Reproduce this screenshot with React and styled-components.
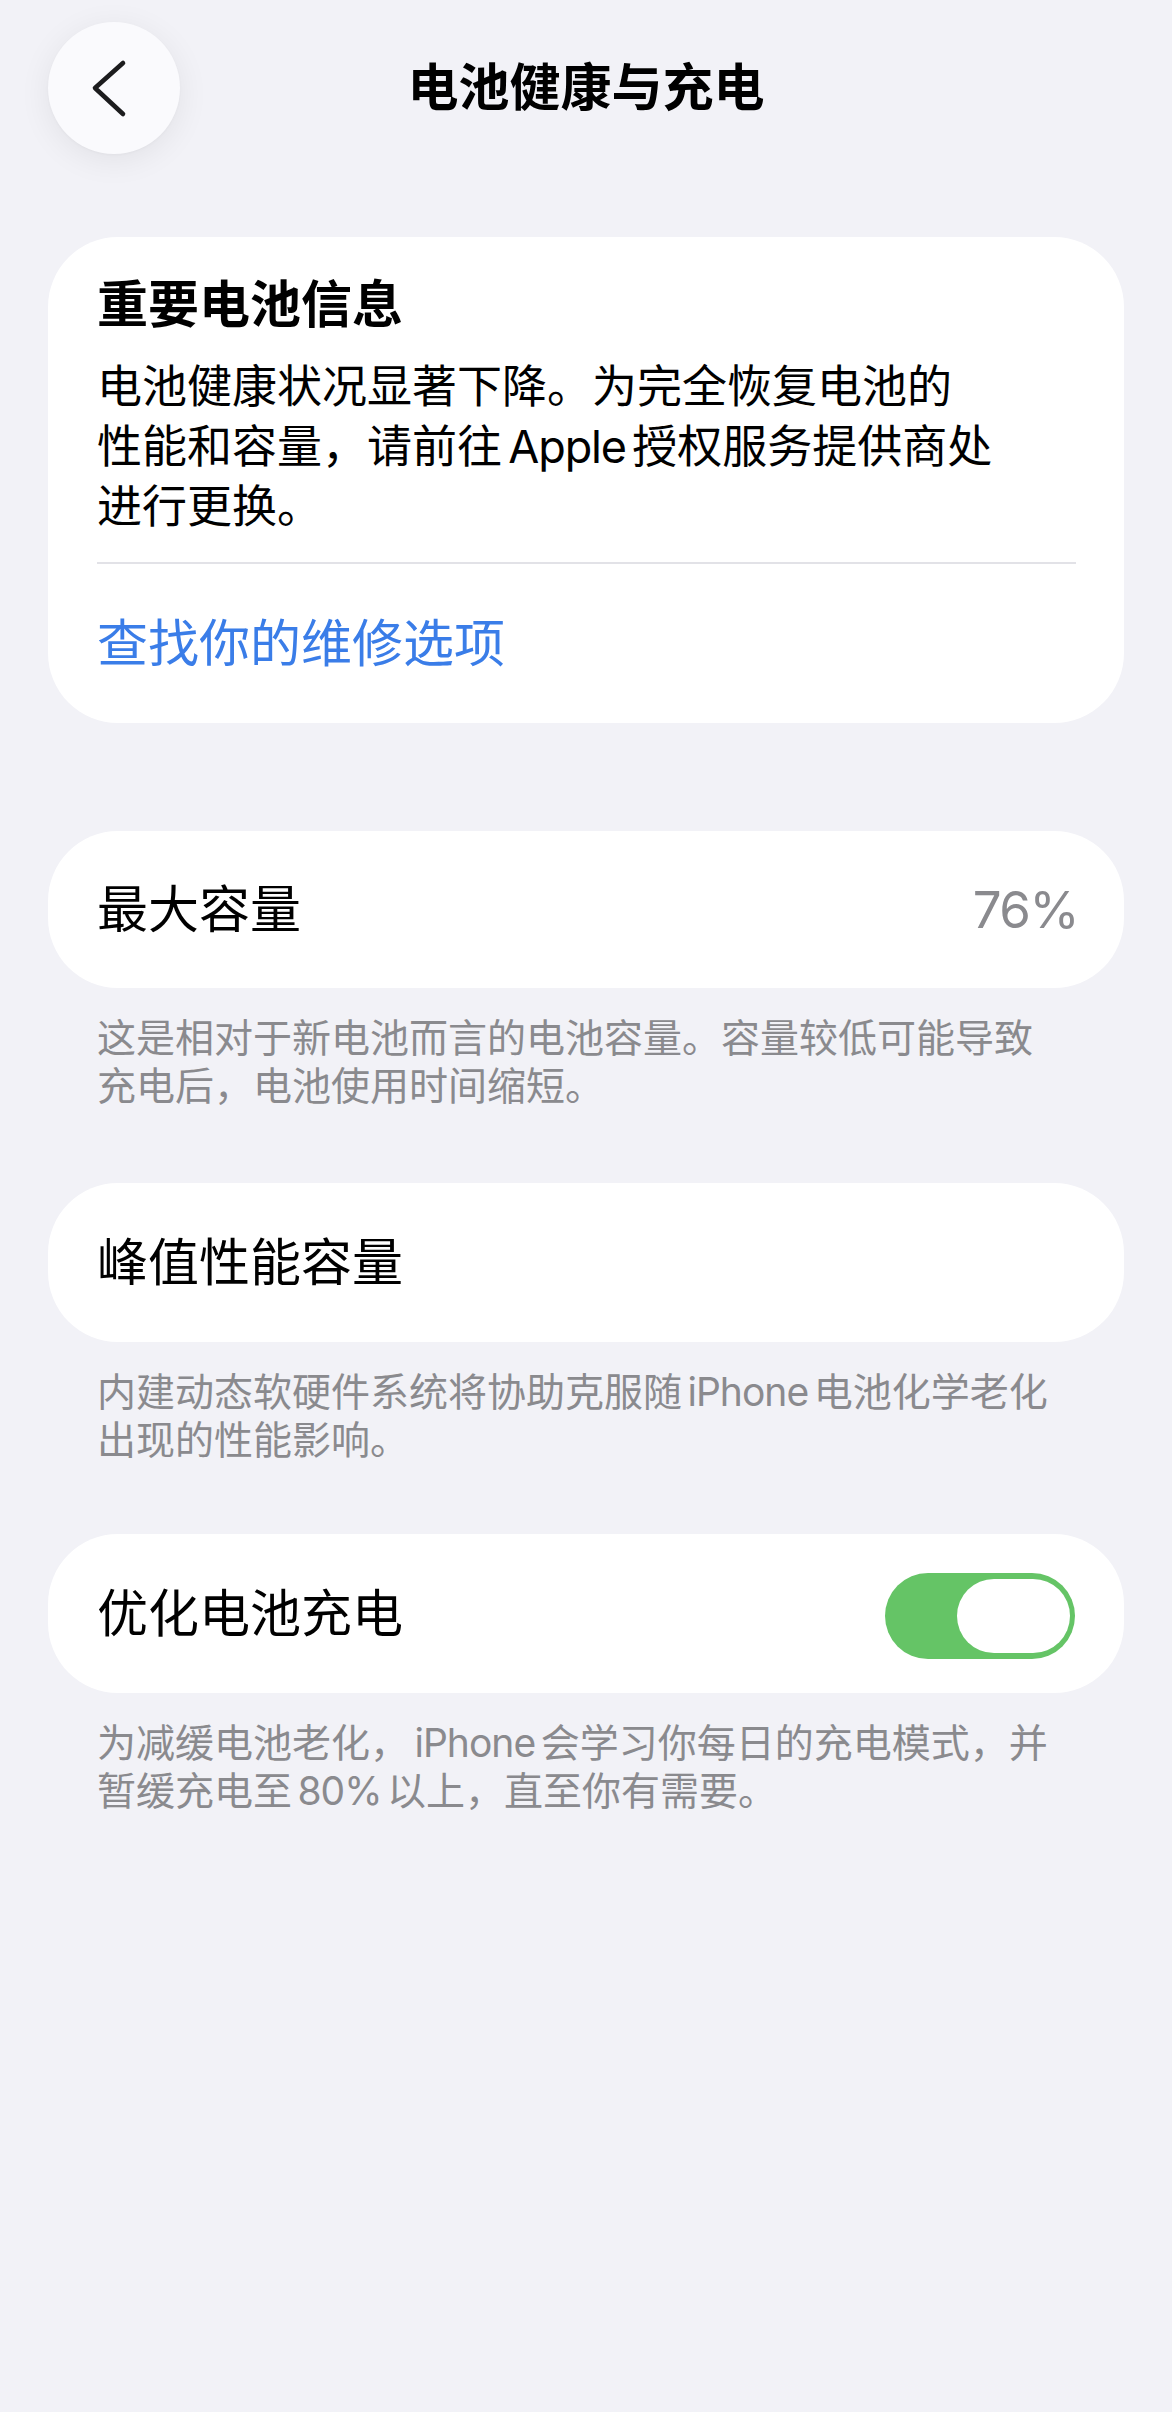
import React from "react";
import styled, { createGlobalStyle } from "styled-components";

const GlobalStyle = createGlobalStyle`
  html, body {
    margin: 0;
    padding: 0;
    background: #f2f2f7;
  }
  body {
    min-height: 2412px;
    font-family: "Inter", "Noto Sans CJK SC", "Noto Sans", sans-serif;
    -webkit-font-smoothing: antialiased;
  }
  * { box-sizing: border-box; }
`;

const Page = styled.div`
  width: 1172px;
  min-height: 2412px;
  background: #f2f2f7;
  color: #000;
`;

const Header = styled.header`
  position: relative;
  height: 176px;
  display: flex;
  align-items: center;
  justify-content: center;
`;

const BackButton = styled.button`
  position: absolute;
  left: 48px;
  top: 22px;
  width: 132px;
  height: 132px;
  border: none;
  border-radius: 50%;
  background: #fafafd;
  box-shadow: 0 6px 32px rgba(0, 0, 0, 0.07), 0 1px 3px rgba(0, 0, 0, 0.03);
  display: flex;
  align-items: center;
  justify-content: center;
  padding: 0;
  cursor: pointer;
`;

const Title = styled.h1`
  margin: 0;
  font-size: 51px;
  font-weight: 600;
  line-height: 60px;
  letter-spacing: 0;
`;

const Content = styled.main`
  margin-top: 61px;
  padding: 0 48px 0 48px;
  display: flex;
  flex-direction: column;
`;

const Group = styled.section`
  margin-bottom: ${(p) => p.$after}px;
`;

const Card = styled.div`
  background: #fff;
  border-radius: 70px;
  overflow: hidden;
`;

const InfoBody = styled.div`
  padding: 38px 49px 25px;
`;

const CardTitle = styled.div`
  font-size: 51px;
  font-weight: 600;
  line-height: 60px;
  margin-bottom: 22px;
`;

const BodyText = styled.p`
  margin: 0;
  font-size: 45px;
  line-height: 60px;
`;

/* Latin words inside Chinese text: tighter tracking, small auto-spacing */
const Latin = styled.span`
  margin: 0 0.14em;
  letter-spacing: -0.025em;
`;

const Divider = styled.div`
  height: 2px;
  margin: 0 48px 0 49px;
  background: #e2e2e7;
`;

const LinkRow = styled.a`
  height: 159px;
  padding: 0 49px;
  display: flex;
  align-items: center;
  font-size: 51px;
  line-height: 60px;
  color: #3a7de8;
  text-decoration: none;
`;

const Row = styled.div`
  height: ${(p) => p.$height || 158}px;
  padding: 0 46px 0 49px;
  display: flex;
  align-items: center;
  justify-content: space-between;
`;

const RowLabel = styled.span`
  font-size: 51px;
  line-height: 60px;
`;

const RowValue = styled.span`
  font-size: 51px;
  line-height: 60px;
  letter-spacing: -0.03em;
  color: #8a8a8e;
`;

const Footnote = styled.p`
  margin: 0;
  padding: 26px 49px 0;
  font-size: 39px;
  line-height: 48px;
  color: #8a8a8e;
`;

const Switch = styled.div`
  width: 190px;
  height: 86px;
  border-radius: 43px;
  background: ${(p) => (p.$on ? "#65c466" : "#e9e9ea")};
  display: flex;
  align-items: center;
  justify-content: ${(p) => (p.$on ? "flex-end" : "flex-start")};
  padding: 0 5px;
  margin: 4px 3px 0 0;
`;

const Knob = styled.div`
  width: 113px;
  height: 74px;
  border-radius: 37px;
  background: #fff;
`;

function Chevron() {
  return (
    <svg width="132" height="132" viewBox="0 0 132 132" fill="none">
      <polyline
        points="75,41 47,66 75,92"
        stroke="#1c1c1e"
        strokeWidth="4.6"
        strokeLinecap="round"
        strokeLinejoin="round"
      />
    </svg>
  );
}

export default function App() {
  return (
    <Page>
      <GlobalStyle />
      <Header>
        <BackButton aria-label="返回">
          <Chevron />
        </BackButton>
        <Title>电池健康与充电</Title>
      </Header>

      <Content>
        <Group $after={108}>
          <Card>
            <InfoBody>
              <CardTitle>重要电池信息</CardTitle>
              <BodyText>
                电池健康状况显著下降。为完全恢复电池的
                <br />
                性能和容量，请前往<Latin>Apple</Latin>授权服务提供商处
                <br />
                进行更换。
              </BodyText>
            </InfoBody>
            <Divider />
            <LinkRow href="#">查找你的维修选项</LinkRow>
          </Card>
        </Group>

        <Group $after={73}>
          <Card>
            <Row $height={157}>
              <RowLabel>最大容量</RowLabel>
              <RowValue>76%</RowValue>
            </Row>
          </Card>
          <Footnote>
            这是相对于新电池而言的电池容量。容量较低可能导致
            <br />
            充电后，电池使用时间缩短。
          </Footnote>
        </Group>

        <Group $after={70}>
          <Card>
            <Row $height={159}>
              <RowLabel>峰值性能容量</RowLabel>
            </Row>
          </Card>
          <Footnote>
            内建动态软硬件系统将协助克服随<Latin>iPhone</Latin>电池化学老化
            <br />
            出现的性能影响。
          </Footnote>
        </Group>

        <Group $after={0}>
          <Card>
            <Row $height={159}>
              <RowLabel>优化电池充电</RowLabel>
              <Switch $on>
                <Knob />
              </Switch>
            </Row>
          </Card>
          <Footnote>
            为减缓电池老化，<Latin>iPhone</Latin>会学习你每日的充电模式，并
            <br />
            暂缓充电至<Latin>80%</Latin>以上，直至你有需要。
          </Footnote>
        </Group>
      </Content>
    </Page>
  );
}
